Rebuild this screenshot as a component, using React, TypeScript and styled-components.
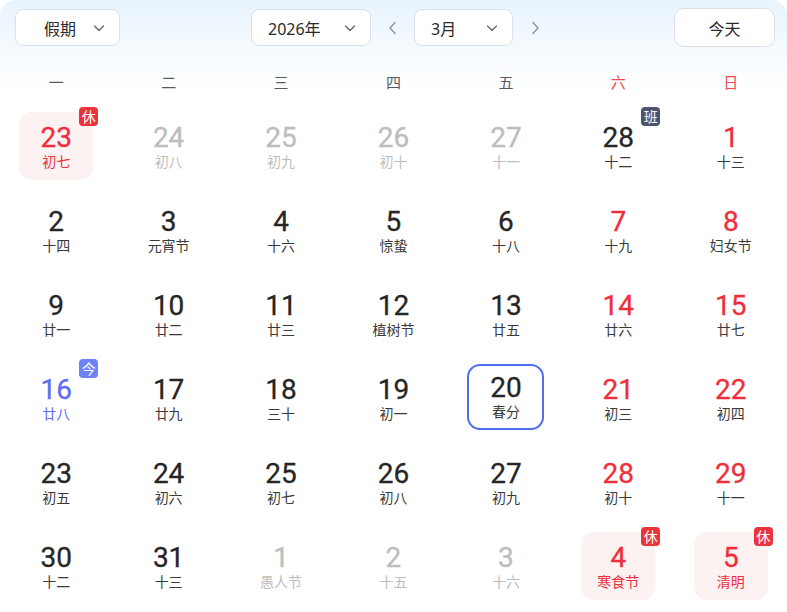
import React from "react";
import styled, { createGlobalStyle, css } from "styled-components";

const GlobalStyle = createGlobalStyle`
  html, body { margin: 0; padding: 0; background: #ffffff; }
  body { font-family: "Noto Sans", "Noto Sans CJK SC", sans-serif; }
  * { box-sizing: border-box; }
`;

const Page = styled.div`
  width: 787px;
  height: 612px;
  border-radius: 16px 16px 0 0;
  background: linear-gradient(180deg, #e7f3fd 0px, #f3f9fe 40px, #ffffff 90px);
  overflow: hidden;
`;

const Header = styled.div`
  display: flex;
  align-items: center;
  height: 55px;
  padding: 0 12px 0 15px;
`;

const Select = styled.div<{ $w: number; $ml?: number }>`
  display: flex;
  align-items: center;
  justify-content: space-between;
  width: ${(p) => p.$w}px;
  height: 37px;
  margin-left: ${(p) => p.$ml ?? 0}px;
  padding: 0 12px 0 16px;
  background: #ffffff;
  border: 1px solid #dcdfe6;
  border-radius: 8px;
  font-size: 16px;
  color: #2a2a2a;
  font-family: "Noto Sans", "Noto Sans CJK SC", sans-serif;
`;

const SelectText = styled.span<{ $pl?: number }>`
  padding-left: ${(p) => p.$pl ?? 0}px;
`;

const ArrowBtn = styled.div`
  display: flex;
  align-items: center;
  justify-content: center;
  width: 43px;
  height: 37px;
  color: #8a8f99;
`;

const TodayBtn = styled.div`
  margin-left: auto;
  display: flex;
  align-items: center;
  justify-content: center;
  width: 101px;
  height: 39px;
  background: #ffffff;
  border: 1px solid #dcdfe6;
  border-radius: 10px;
  font-size: 16px;
  color: #2a2a2a;
`;

const WeekRow = styled.div`
  display: grid;
  grid-template-columns: repeat(7, 1fr);
  height: 49px;
  padding-top: 3px;
  align-items: center;
`;

const WeekLabel = styled.div<{ $weekend?: boolean }>`
  text-align: center;
  font-size: 15px;
  color: ${(p) => (p.$weekend ? "#f0484f" : "#555a60")};
  font-family: "Noto Sans CJK SC", sans-serif;
`;

const Grid = styled.div`
  display: grid;
  grid-template-columns: repeat(7, 1fr);
  grid-auto-rows: 84px;
`;

const Cell = styled.div`
  display: flex;
  align-items: center;
  justify-content: center;
`;

type Kind = "normal" | "weekend" | "other" | "today" | "holiday";

const DayBox = styled.div<{ $holiday?: boolean; $selected?: boolean }>`
  position: relative;
  width: 74px;
  height: 68px;
  display: flex;
  flex-direction: column;
  align-items: center;
  justify-content: center;
  border-radius: 13px;
  ${(p) =>
    p.$holiday &&
    css`
      background: #fdf2f2;
    `}
  ${(p) =>
    p.$selected &&
    css`
      border: 2px solid #4f6ef0;
      width: 77px;
      height: 66px;
      margin-top: -3px;
    `}
`;

const numColor: Record<Kind, string> = {
  normal: "#262626",
  weekend: "#ee2f3b",
  other: "#bdbdbd",
  today: "#5d6ef2",
  holiday: "#ee2f3b",
};

const lunarColor: Record<Kind, string> = {
  normal: "#3a3a3a",
  weekend: "#3a3a3a",
  other: "#bdbdbd",
  today: "#5d6ef2",
  holiday: "#ee2f3b",
};

const DayNum = styled.div<{ $kind: Kind }>`
  font-size: 28px;
  line-height: 30px;
  font-weight: 400;
  color: ${(p) => numColor[p.$kind]};
  font-family: Roboto, "Noto Sans", sans-serif;
  -webkit-text-stroke: 0.3px ${(p) => numColor[p.$kind]};
`;

const Lunar = styled.div<{ $kind: Kind }>`
  font-size: 14px;
  line-height: 17px;
  color: ${(p) => lunarColor[p.$kind]};
  font-family: "Noto Sans CJK SC", sans-serif;
`;

const badgeBg = { 休: "#e8343a", 班: "#4b5470", 今: "#6d82f5" } as const;

const Badge = styled.div<{ $t: keyof typeof badgeBg }>`
  position: absolute;
  top: -5px;
  right: -5px;
  width: 19px;
  height: 19px;
  border-radius: 4px;
  background: ${(p) => badgeBg[p.$t]};
  color: #ffffff;
  font-size: 14px;
  line-height: 19px;
  text-align: center;
  font-family: "Noto Sans CJK SC", sans-serif;
`;

const Chevron = ({ dir }: { dir: "down" | "left" | "right" }) => {
  const d =
    dir === "down" ? "M3.5 6 L8 10.5 L12.5 6" : dir === "left" ? "M10 2.5 L5 8 L10 13.5" : "M6 2.5 L11 8 L6 13.5";
  return (
    <svg width="16" height="16" viewBox="0 0 16 16" fill="none">
      <path d={d} stroke={dir === "down" ? "#5f6570" : "#8a8f99"} strokeWidth="1.3" strokeLinecap="round" strokeLinejoin="round" />
    </svg>
  );
};

type Day = { n: number; l: string; k: Kind; b?: keyof typeof badgeBg; sel?: boolean };

const rows: Day[][] = [
  [
    { n: 23, l: "初七", k: "holiday", b: "休" },
    { n: 24, l: "初八", k: "other" },
    { n: 25, l: "初九", k: "other" },
    { n: 26, l: "初十", k: "other" },
    { n: 27, l: "十一", k: "other" },
    { n: 28, l: "十二", k: "normal", b: "班" },
    { n: 1, l: "十三", k: "weekend" },
  ],
  [
    { n: 2, l: "十四", k: "normal" },
    { n: 3, l: "元宵节", k: "normal" },
    { n: 4, l: "十六", k: "normal" },
    { n: 5, l: "惊蛰", k: "normal" },
    { n: 6, l: "十八", k: "normal" },
    { n: 7, l: "十九", k: "weekend" },
    { n: 8, l: "妇女节", k: "weekend" },
  ],
  [
    { n: 9, l: "廿一", k: "normal" },
    { n: 10, l: "廿二", k: "normal" },
    { n: 11, l: "廿三", k: "normal" },
    { n: 12, l: "植树节", k: "normal" },
    { n: 13, l: "廿五", k: "normal" },
    { n: 14, l: "廿六", k: "weekend" },
    { n: 15, l: "廿七", k: "weekend" },
  ],
  [
    { n: 16, l: "廿八", k: "today", b: "今" },
    { n: 17, l: "廿九", k: "normal" },
    { n: 18, l: "三十", k: "normal" },
    { n: 19, l: "初一", k: "normal" },
    { n: 20, l: "春分", k: "normal", sel: true },
    { n: 21, l: "初三", k: "weekend" },
    { n: 22, l: "初四", k: "weekend" },
  ],
  [
    { n: 23, l: "初五", k: "normal" },
    { n: 24, l: "初六", k: "normal" },
    { n: 25, l: "初七", k: "normal" },
    { n: 26, l: "初八", k: "normal" },
    { n: 27, l: "初九", k: "normal" },
    { n: 28, l: "初十", k: "weekend" },
    { n: 29, l: "十一", k: "weekend" },
  ],
  [
    { n: 30, l: "十二", k: "normal" },
    { n: 31, l: "十三", k: "normal" },
    { n: 1, l: "愚人节", k: "other" },
    { n: 2, l: "十五", k: "other" },
    { n: 3, l: "十六", k: "other" },
    { n: 4, l: "寒食节", k: "holiday", b: "休" },
    { n: 5, l: "清明", k: "holiday", b: "休" },
  ],
];

const weekdays = ["一", "二", "三", "四", "五", "六", "日"];

export default function App() {
  return (
    <>
      <GlobalStyle />
      <Page>
        <Header>
          <Select $w={105}>
            <SelectText $pl={12}>假期</SelectText>
            <Chevron dir="down" />
          </Select>
          <Select $w={120} $ml={131}>
            <SelectText>2026年</SelectText>
            <Chevron dir="down" />
          </Select>
          <ArrowBtn>
            <Chevron dir="left" />
          </ArrowBtn>
          <Select $w={99}>
            <SelectText>3月</SelectText>
            <Chevron dir="down" />
          </Select>
          <ArrowBtn>
            <Chevron dir="right" />
          </ArrowBtn>
          <TodayBtn>今天</TodayBtn>
        </Header>
        <WeekRow>
          {weekdays.map((w, i) => (
            <WeekLabel key={w} $weekend={i >= 5}>
              {w}
            </WeekLabel>
          ))}
        </WeekRow>
        <Grid>
          {rows.flat().map((d, i) => (
            <Cell key={i}>
              <DayBox $holiday={d.k === "holiday"} $selected={d.sel}>
                <DayNum $kind={d.k}>{d.n}</DayNum>
                <Lunar $kind={d.k}>{d.l}</Lunar>
                {d.b && <Badge $t={d.b}>{d.b}</Badge>}
              </DayBox>
            </Cell>
          ))}
        </Grid>
      </Page>
    </>
  );
}
